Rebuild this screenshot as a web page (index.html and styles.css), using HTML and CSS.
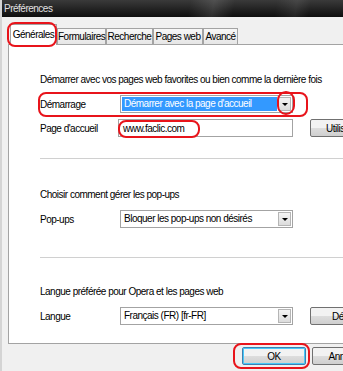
FILE: index.html
```html
<!doctype html>
<html lang="fr">
  <head>
    <meta charset="UTF-8" />
    <title>Préférences</title>
    <link rel="stylesheet" href="styles.css">
  </head>
  <body>
    <div class="window">
      <div class="titlebar">Préférences</div>

      <div class="tabs">
        <span class="tab active w-gen">Générales</span>
        <span class="tab w-form">Formulaires</span>
        <span class="tab w-rech">Recherche</span>
        <span class="tab w-pages">Pages web</span>
        <span class="tab w-av">Avancé</span>
      </div>

      <div class="panel">
        <div class="group first">
          <p class="intro">Démarrer avec vos pages web favorites ou bien comme la dernière fois</p>
          <div class="row">
            <span class="label">Démarrage</span>
            <div class="select selected">
              <span class="value">Démarrer avec la page d'accueil</span>
              <span class="arrow"></span>
            </div>
          </div>
          <div class="row">
            <span class="label">Page d'accueil</span>
            <div class="input">www.faclic.com</div>
            <button class="btn side">Utiliser la page courante</button>
          </div>
        </div>

        <div class="group second">
          <p class="intro">Choisir comment gérer les pop-ups</p>
          <div class="row">
            <span class="label">Pop-ups</span>
            <div class="select">
              <span class="value">Bloquer les pop-ups non désirés</span>
              <span class="arrow"></span>
            </div>
          </div>
        </div>

        <div class="group last">
          <p class="intro">Langue préférée pour Opera et les pages web</p>
          <div class="row">
            <span class="label">Langue</span>
            <div class="select">
              <span class="value">Français (FR) [fr-FR]</span>
              <span class="arrow"></span>
            </div>
            <button class="btn side details">Détails...</button>
          </div>
        </div>
      </div>

      <div class="footer">
        <button class="btn default">OK</button>
        <button class="btn">Annuler</button>
      </div>

      <!-- annotations rouges -->
      <span class="mark mark-tab"></span>
      <span class="mark mark-row"></span>
      <span class="mark mark-arrow"></span>
      <span class="mark mark-url"></span>
      <span class="mark mark-ok"></span>
    </div>
  </body>
</html>
```

FILE: styles.css
```css
html, body {
  margin: 0;
  padding: 0;
}
body {
  width: 343px;
  height: 371px;
  overflow: hidden;
  background: #f0f0f0;
  font-family: "Liberation Sans", Arial, sans-serif;
  font-size: 10px;
  letter-spacing: -0.5px;
  color: #000;
}
.window {
  position: relative;
  width: 343px;
  height: 371px;
  border-left: 2px solid #d4d4d4;
  box-sizing: border-box;
  overflow: hidden;
}
.titlebar {
  height: 17px;
  margin-left: -2px;
  padding-left: 4px;
  line-height: 17px;
  color: #e0e0e0;
  background:
    linear-gradient(100deg, transparent 55%, rgba(255, 255, 255, 0.12) 62%, transparent 68%, transparent 80%, rgba(255, 255, 255, 0.08) 86%, transparent 90%),
    linear-gradient(#3a3a3a, #0e0e0e);
}
.tabs {
  display: flex;
  align-items: flex-end;
  height: 27px;
  padding-left: 8px;
}
.tab {
  height: 16px;
  line-height: 15px;
  box-sizing: border-box;
  text-align: center;
  border: 1px solid #a3a3a3;
  border-bottom: none;
  background: linear-gradient(#f7f7f7, #e6e6e6);
  white-space: nowrap;
}
.tab.active {
  position: relative;
  height: 21px;
  line-height: 19px;
  margin-bottom: -1px;
  background: #fff;
  z-index: 1;
}
.w-gen { width: 47px; }
.w-form { width: 49px; }
.w-rech { width: 47px; }
.w-pages { width: 50px; }
.w-av { width: 35px; }
.panel {
  width: 360px;
  height: 300px;
  margin-left: 6px;
  padding-left: 31px;
  box-sizing: border-box;
  background: #fff;
  border: 1px solid #a3a3a3;
}
.group {
  box-sizing: border-box;
  border-bottom: 1px solid #d0d0d0;
}
.group.first {
  height: 114px;
  padding-top: 29px;
}
.group.second {
  height: 99px;
  padding-top: 30px;
}
.group.last {
  border-bottom: none;
  padding-top: 28px;
}
.intro {
  margin: 0 0 9px;
  line-height: 12px;
  white-space: nowrap;
}
.row {
  display: flex;
  align-items: center;
  height: 18px;
  margin-bottom: 6px;
}
.label {
  width: 80px;
  flex: none;
}
.select, .input {
  display: flex;
  align-items: center;
  width: 173px;
  height: 18px;
  box-sizing: border-box;
  border: 1px solid #a3a3a3;
  background: #fff;
  flex: none;
}
.input {
  margin-left: -2px;
  width: 175px;
  padding-left: 4px;
}
.select .value {
  flex: 1;
  height: 14px;
  line-height: 14px;
  margin: 1px;
  padding-left: 2px;
  white-space: nowrap;
  overflow: hidden;
}
.select.selected .value {
  background: #3399ff;
  color: #fff;
}
.arrow {
  position: relative;
  width: 13px;
  height: 14px;
  margin-right: 1px;
  box-sizing: border-box;
  border: 1px solid #b5b5b5;
  background: linear-gradient(#f4f4f4, #dcdcdc);
}
.arrow::after {
  content: "";
  position: absolute;
  left: 3px;
  top: 5px;
  border-left: 3px solid transparent;
  border-right: 3px solid transparent;
  border-top: 3px solid #000;
}
.btn {
  height: 18px;
  padding: 0 6px;
  font: inherit;
  letter-spacing: inherit;
  color: #000;
  border: 1px solid #707070;
  border-radius: 2px;
  background: linear-gradient(#f2f2f2 50%, #dddddd 50%, #cfcfcf);
  white-space: nowrap;
  overflow: hidden;
}
.btn.side {
  margin-left: 17px;
  flex: none;
  width: 70px;
  text-align: left;
  padding-left: 15px;
}
.btn.side.details {
  padding-left: 21px;
}
.footer {
  display: flex;
  gap: 6px;
  padding: 3px 0 0 240px;
}
.footer .btn {
  width: 64px;
  flex: none;
  text-align: center;
}
.footer .btn.default {
  border-color: #3c7fb1;
  box-shadow: inset 0 0 0 1px #48c8f8;
}
.mark {
  position: absolute;
  box-sizing: border-box;
  border: 2px solid #e8141b;
  border-radius: 8px;
  pointer-events: none;
  z-index: 5;
}
.mark-tab {
  left: 5px;
  top: 22px;
  width: 50px;
  height: 25px;
}
.mark-row {
  left: 36px;
  top: 92px;
  width: 270px;
  height: 25px;
}
.mark-arrow {
  left: 275px;
  top: 91px;
  width: 18px;
  height: 24px;
  border-radius: 9px;
}
.mark-url {
  left: 116px;
  top: 120px;
  width: 82px;
  height: 18px;
}
.mark-ok {
  left: 231px;
  top: 343px;
  width: 77px;
  height: 26px;
}
```
